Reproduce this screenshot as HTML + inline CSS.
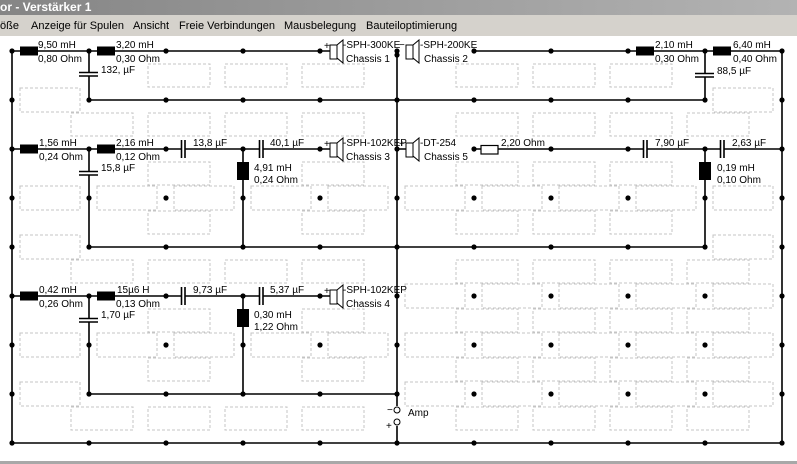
<!DOCTYPE html>
<html><head><meta charset="utf-8"><style>
html,body{margin:0;padding:0;width:797px;height:464px;overflow:hidden;background:#fff}
svg{display:block}
text{font-family:"Liberation Sans",sans-serif;font-size:10px;fill:#000}
.s{fill:none;stroke:#c4c4c4;stroke-width:1;stroke-dasharray:3,2}
.w{stroke:#000;stroke-width:1.6;fill:none}
</style></head><body>
<svg width="797" height="464" viewBox="0 0 797 464" xmlns="http://www.w3.org/2000/svg">
<defs>
<linearGradient id="tg" x1="0" x2="1" y1="0" y2="0"><stop offset="0" stop-color="#858585"/><stop offset="1" stop-color="#b3b3b3"/></linearGradient>
<pattern id="dp" patternUnits="userSpaceOnUse" x="-26.5" y="26.5" width="77" height="49"><circle cx="38.5" cy="24.5" r="2.6" fill="#000"/></pattern>
</defs>
<rect x="0" y="0" width="797" height="15" fill="url(#tg)"/>
<text x="0" y="11" style="font-size:12px;font-weight:bold;fill:#fff">or - Verstärker 1</text>
<rect x="0" y="15" width="797" height="21" fill="#d5d2cc"/>
<g style="font-size:11px">
<text x="0" y="29" style="font-size:11px">öße</text>
<text x="31" y="29" style="font-size:11px">Anzeige für Spulen</text>
<text x="133" y="29" style="font-size:11px">Ansicht</text>
<text x="179" y="29" style="font-size:11px">Freie Verbindungen</text>
<text x="284" y="29" style="font-size:11px">Mausbelegung</text>
<text x="366" y="29" style="font-size:11px">Bauteiloptimierung</text>
</g>
<rect x="0" y="461" width="797" height="3" fill="#a8a8a8"/>

<!-- slots horizontal -->
<g class="s">
<rect x="20" y="88" width="60" height="24"/><rect x="713" y="88" width="60" height="24"/>
<rect x="20" y="186" width="60" height="24"/><rect x="97" y="186" width="60" height="24"/><rect x="174" y="186" width="60" height="24"/><rect x="251" y="186" width="60" height="24"/><rect x="328" y="186" width="60" height="24"/><rect x="405" y="186" width="60" height="24"/><rect x="482" y="186" width="60" height="24"/><rect x="559" y="186" width="60" height="24"/><rect x="636" y="186" width="60" height="24"/><rect x="713" y="186" width="60" height="24"/>
<rect x="20" y="235" width="60" height="24"/><rect x="713" y="235" width="60" height="24"/>
<rect x="405" y="284" width="60" height="24"/><rect x="482" y="284" width="60" height="24"/><rect x="559" y="284" width="60" height="24"/><rect x="636" y="284" width="60" height="24"/><rect x="713" y="284" width="60" height="24"/>
<rect x="20" y="333" width="60" height="24"/><rect x="97" y="333" width="60" height="24"/><rect x="174" y="333" width="60" height="24"/><rect x="251" y="333" width="60" height="24"/><rect x="328" y="333" width="60" height="24"/><rect x="405" y="333" width="60" height="24"/><rect x="482" y="333" width="60" height="24"/><rect x="559" y="333" width="60" height="24"/><rect x="636" y="333" width="60" height="24"/><rect x="713" y="333" width="60" height="24"/>
<rect x="20" y="382" width="60" height="24"/><rect x="405" y="382" width="60" height="24"/><rect x="482" y="382" width="60" height="24"/><rect x="559" y="382" width="60" height="24"/><rect x="636" y="382" width="60" height="24"/><rect x="713" y="382" width="60" height="24"/>
<!-- vertical slots -->
<rect x="148" y="64" width="62" height="23"/><rect x="225" y="64" width="62" height="23"/><rect x="302" y="64" width="62" height="23"/><rect x="456" y="64" width="62" height="23"/><rect x="533" y="64" width="62" height="23"/><rect x="610" y="64" width="62" height="23"/>
<rect x="71" y="113" width="62" height="23"/><rect x="148" y="113" width="62" height="23"/><rect x="225" y="113" width="62" height="23"/><rect x="302" y="113" width="62" height="23"/><rect x="456" y="113" width="62" height="23"/><rect x="533" y="113" width="62" height="23"/><rect x="610" y="113" width="62" height="23"/><rect x="687" y="113" width="62" height="23"/>
<rect x="148" y="162" width="62" height="23"/><rect x="302" y="162" width="62" height="23"/><rect x="456" y="162" width="62" height="23"/><rect x="533" y="162" width="62" height="23"/><rect x="610" y="162" width="62" height="23"/>
<rect x="148" y="211" width="62" height="23"/><rect x="302" y="211" width="62" height="23"/><rect x="456" y="211" width="62" height="23"/><rect x="533" y="211" width="62" height="23"/><rect x="610" y="211" width="62" height="23"/>
<rect x="71" y="260" width="62" height="23"/><rect x="148" y="260" width="62" height="23"/><rect x="225" y="260" width="62" height="23"/><rect x="302" y="260" width="62" height="23"/><rect x="456" y="260" width="62" height="23"/><rect x="533" y="260" width="62" height="23"/><rect x="610" y="260" width="62" height="23"/><rect x="687" y="260" width="62" height="23"/>
<rect x="148" y="309" width="62" height="23"/><rect x="302" y="309" width="62" height="23"/><rect x="456" y="309" width="62" height="23"/><rect x="533" y="309" width="62" height="23"/><rect x="610" y="309" width="62" height="23"/><rect x="687" y="309" width="62" height="23"/>
<rect x="148" y="358" width="62" height="23"/><rect x="302" y="358" width="62" height="23"/><rect x="456" y="358" width="62" height="23"/><rect x="533" y="358" width="62" height="23"/><rect x="610" y="358" width="62" height="23"/><rect x="687" y="358" width="62" height="23"/>
<rect x="71" y="407" width="62" height="23"/><rect x="148" y="407" width="62" height="23"/><rect x="225" y="407" width="62" height="23"/><rect x="302" y="407" width="62" height="23"/><rect x="456" y="407" width="62" height="23"/><rect x="533" y="407" width="62" height="23"/><rect x="610" y="407" width="62" height="23"/><rect x="687" y="407" width="62" height="23"/>
</g>

<!-- wires -->
<g class="w">
<path d="M12 51V443M782 51V443M12 443H782M397 51V406M397 426V443"/>
<path d="M12 51H330M474 51H782M89 100H705"/>
<path d="M12 149H330M397 149H406M474 149H782M89 247H705"/>
<path d="M12 296H330M89 394H397"/>
<path d="M89 51V100M705 51V100M89 149V247M243 149V247M705 149V247M89 296V394M243 296V394"/>
</g>
<rect x="9" y="48" width="776" height="398" fill="url(#dp)"/>
<circle cx="397" cy="55" r="2.6"/>

<!-- inductors horizontal -->
<g fill="#000">
<rect x="20" y="46.5" width="18" height="9"/><rect x="97" y="46.5" width="18" height="9"/>
<rect x="636" y="46.5" width="18" height="9"/><rect x="713" y="46.5" width="18" height="9"/>
<rect x="20" y="144.5" width="18" height="9"/><rect x="97" y="144.5" width="18" height="9"/>
<rect x="20" y="291.5" width="18" height="9"/><rect x="97" y="291.5" width="18" height="9"/>
<rect x="237" y="162" width="12" height="18"/><rect x="699" y="162" width="12" height="18"/>
<rect x="237" y="309" width="12" height="18"/>
</g>
<!-- vertical caps -->
<g>
<rect x="80" y="72" width="18" height="4" fill="#fff"/><path class="w" d="M79 72.5H98M79 76H98"/>
<rect x="696" y="73" width="18" height="4" fill="#fff"/><path class="w" d="M695 73.5H714M695 77H714"/>
<rect x="80" y="171" width="18" height="4" fill="#fff"/><path class="w" d="M79 171.5H98M79 175H98"/>
<rect x="80" y="318" width="18" height="4" fill="#fff"/><path class="w" d="M79 318.5H98M79 322H98"/>
</g>
<!-- horizontal caps -->
<g>
<rect x="181" y="141" width="4" height="18" fill="#fff"/><path class="w" d="M181.5 140V158M185 140V158"/>
<rect x="259" y="141" width="4" height="18" fill="#fff"/><path class="w" d="M259.5 140V158M263 140V158"/>
<rect x="643" y="141" width="4" height="18" fill="#fff"/><path class="w" d="M643.5 140V158M647 140V158"/>
<rect x="720" y="141" width="4" height="18" fill="#fff"/><path class="w" d="M720.5 140V158M724 140V158"/>
<rect x="181" y="288" width="4" height="18" fill="#fff"/><path class="w" d="M181.5 287V305M185 287V305"/>
<rect x="259" y="288" width="4" height="18" fill="#fff"/><path class="w" d="M259.5 287V305M263 287V305"/>
</g>
<!-- resistor -->
<rect x="481" y="145.5" width="17" height="8.5" fill="#fff" stroke="#000" stroke-width="1.2"/>
<!-- speakers -->
<g fill="#fff" stroke="#000" stroke-width="1">
<rect x="330" y="45" width="7" height="14"/><path d="M337 45L343 40V63L337 58Z"/>
<rect x="406" y="45" width="7" height="14"/><path d="M413 45L419 40V63L413 58Z"/>
<rect x="330" y="143" width="7" height="14"/><path d="M337 143L343 138V161L337 156Z"/>
<rect x="406" y="143" width="7" height="14"/><path d="M413 143L419 138V161L413 156Z"/>
<rect x="330" y="290" width="7" height="14"/><path d="M337 290L343 285V308L337 303Z"/>
</g>
<!-- amp -->
<circle cx="397" cy="410" r="3" fill="#fff" stroke="#000" stroke-width="1"/>
<circle cx="397" cy="422" r="3" fill="#fff" stroke="#000" stroke-width="1"/>
<text x="387" y="413">−</text><text x="386" y="429">+</text><text x="408" y="416">Amp</text>

<!-- labels -->
<text x="38" y="48">9,50 mH</text><text x="38" y="62">0,80 Ohm</text>
<text x="116" y="48">3,20 mH</text><text x="116" y="62">0,30 Ohm</text>
<text x="101" y="73">132, µF</text>
<text x="324" y="49">+</text><text x="343" y="48">-SPH-300KE</text><text x="346" y="62">Chassis 1</text>
<text x="399" y="48">−</text><text x="420" y="48">-SPH-200KE</text><text x="424" y="62">Chassis 2</text>
<text x="655" y="48">2,10 mH</text><text x="655" y="62">0,30 Ohm</text>
<text x="733" y="48">6,40 mH</text><text x="733" y="62">0,40 Ohm</text>
<text x="717" y="74">88,5 µF</text>

<text x="39" y="146">1,56 mH</text><text x="39" y="160">0,24 Ohm</text>
<text x="116" y="146">2,16 mH</text><text x="116" y="160">0,12 Ohm</text>
<text x="101" y="171">15,8 µF</text>
<text x="193" y="146">13,8 µF</text><text x="270" y="146">40,1 µF</text>
<text x="254" y="171">4,91 mH</text><text x="254" y="183">0,24 Ohm</text>
<text x="324" y="147">+</text><text x="343" y="146">-SPH-102KEP</text><text x="346" y="160">Chassis 3</text>
<text x="399" y="147">+</text><text x="420" y="146">-DT-254</text><text x="424" y="160">Chassis 5</text>
<text x="501" y="146">2,20 Ohm</text>
<text x="655" y="146">7,90 µF</text><text x="732" y="146">2,63 µF</text>
<text x="717" y="171">0,19 mH</text><text x="717" y="183">0,10 Ohm</text>

<text x="39" y="293">0,42 mH</text><text x="39" y="307">0,26 Ohm</text>
<text x="117" y="293">15µ6 H</text><text x="116" y="307">0,13 Ohm</text>
<text x="101" y="318">1,70 µF</text>
<text x="193" y="293">9,73 µF</text><text x="270" y="293">5,37 µF</text>
<text x="254" y="318">0,30 mH</text><text x="254" y="330">1,22 Ohm</text>
<text x="324" y="294">+</text><text x="343" y="293">-SPH-102KEP</text><text x="346" y="307">Chassis 4</text>
</svg>
</body></html>
